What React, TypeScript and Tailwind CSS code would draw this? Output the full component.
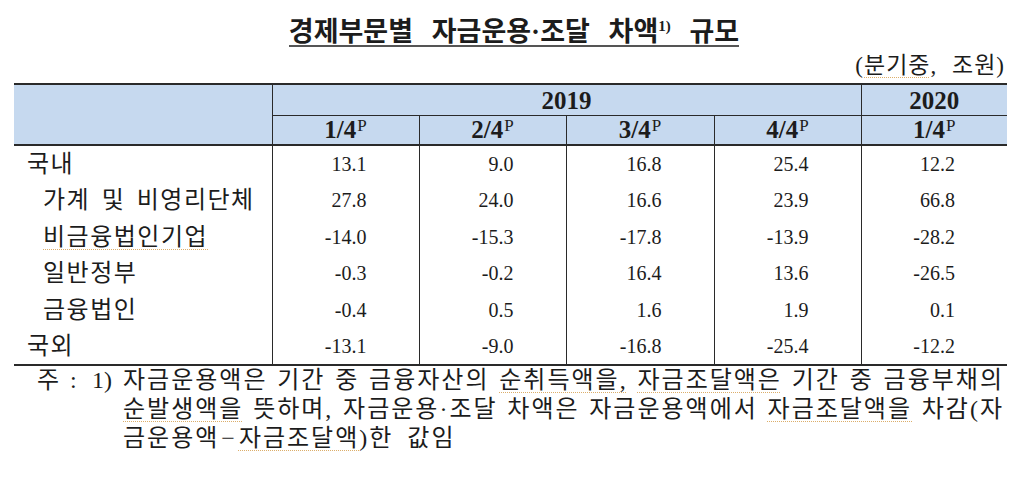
import React from "react";

const FONT = "'Liberation Serif', 'Noto Sans CJK KR', serif";

const rows: { label: string; indent: boolean; vals: string[]; spell?: boolean; h: string }[] = [
  { label: "국내", indent: false, vals: ["13.1", "9.0", "16.8", "25.4", "12.2"], h: "h-[37px]" },
  { label: "가계 및 비영리단체", indent: true, vals: ["27.8", "24.0", "16.6", "23.9", "66.8"], h: "h-[36px]" },
  { label: "비금융법인기업", indent: true, vals: ["-14.0", "-15.3", "-17.8", "-13.9", "-28.2"], spell: true, h: "h-[37px]" },
  { label: "일반정부", indent: true, vals: ["-0.3", "-0.2", "16.4", "13.6", "-26.5"], h: "h-[36px]" },
  { label: "금융법인", indent: true, vals: ["-0.4", "0.5", "1.6", "1.9", "0.1"], h: "h-[37px]" },
  { label: "국외", indent: false, vals: ["-13.1", "-9.0", "-16.8", "-25.4", "-12.2"], h: "h-[37px]" },
];

const Spell = ({ children }: { children: React.ReactNode }) => (
  <span className="underline decoration-dotted decoration-[#dcae6a] decoration-1 underline-offset-[4px]">
    {children}
  </span>
);

const Q = ({ n }: { n: string }) => (
  <span>
    {n}/4<span className="relative -top-[7px] ml-[1px] text-[17px] leading-none font-normal">P</span>
  </span>
);

export default function App() {
  return (
    <div className="w-[1024px] h-[488px] bg-white text-[#1c1c1c] flex flex-col" style={{ fontFamily: FONT }}>
      <div className="flex justify-center pt-[19px] pl-[4px] h-[47px]">
        <span className="inline-block h-[28px] text-[27px] leading-[26px] font-bold border-b-2 border-[#555] [word-spacing:12px]">
          경제부문별 자금운용·조달 차액<span className="relative -top-[10px] text-[15px] leading-none">1)</span> 규모
        </span>
      </div>
      <div className="mt-[8px] h-[22px] flex justify-end pr-[19px] text-[23px] leading-[22px] tracking-[1px] [word-spacing:8px]">
        <span>
          (<Spell>분기중</Spell>, 조원)
        </span>
      </div>
      <table className="mt-[6px] ml-[14px] w-[993px] table-fixed border-collapse">
        <colgroup>
          <col className="w-[258px]" />
          <col className="w-[147px]" />
          <col className="w-[147px]" />
          <col className="w-[148px]" />
          <col className="w-[147px]" />
          <col className="w-[146px]" />
        </colgroup>
        <thead className="bg-[#c6d9ef] text-[25px] font-bold">
          <tr className="h-[31px]">
            <th rowSpan={2} className="border-t-2 border-b-2 border-r border-[#2a2a2a]"></th>
            <th colSpan={4} className="border-t-2 border-b border-r border-[#2a2a2a] leading-[24px] pt-[2px]">
              2019
            </th>
            <th className="border-t-2 border-b border-[#2a2a2a] leading-[24px] pt-[2px]">2020</th>
          </tr>
          <tr className="h-[30px]">
            <th className="border-b-2 border-r border-[#2a2a2a] leading-[24px]"><Q n="1" /></th>
            <th className="border-b-2 border-r border-[#2a2a2a] leading-[24px]"><Q n="2" /></th>
            <th className="border-b-2 border-r border-[#2a2a2a] leading-[24px]"><Q n="3" /></th>
            <th className="border-b-2 border-r border-[#2a2a2a] leading-[24px]"><Q n="4" /></th>
            <th className="border-b-2 border-[#2a2a2a] leading-[24px]"><Q n="1" /></th>
          </tr>
        </thead>
        <tbody className="text-[20px]">
          {rows.map((r, i) => (
            <tr key={i} className={`${r.h} ${i === rows.length - 1 ? "border-b-2 border-[#2a2a2a]" : ""}`}>
              <td className={`border-r border-[#2a2a2a] text-[24px] leading-[24px] tracking-[1.5px] whitespace-nowrap [word-spacing:4px] ${r.indent ? "pl-[29px]" : "pl-[13px]"}`}>
                {r.spell ? <Spell>{r.label}</Spell> : r.label}
              </td>
              {r.vals.map((v, j) => (
                <td
                  key={j}
                  className={`text-right leading-[24px] pr-[52px] ${j < 4 ? "border-r border-[#2a2a2a]" : ""}`}
                >
                  {v}
                </td>
              ))}
            </tr>
          ))}
        </tbody>
      </table>
      <div className="flex pl-[37px] pr-[20px] text-[24px] leading-[29px]">
        <div className="w-[86px] shrink-0 flex">
          <span className="w-[33px]">주</span>
          <span className="w-[22px]">:</span>
          <span>1)</span>
        </div>
        <div className="flex-1 tracking-[2px]">
          <div className="whitespace-nowrap flex justify-between">
            <span>자금운용액은</span>
            <span>기간</span>
            <span>중</span>
            <span>금융자산의</span>
            <span><Spell>순취득액을,</Spell></span>
            <span><Spell>자금조달액은</Spell></span>
            <span>기간</span>
            <span>중</span>
            <span>금융부채의</span>
          </div>
          <div className="whitespace-nowrap flex justify-between">
            <span><Spell>순발생액을</Spell></span>
            <span>뜻하며,</span>
            <span>자금운용·조달</span>
            <span>차액은</span>
            <span>자금운용액에서</span>
            <span><Spell>자금조달액을</Spell></span>
            <span>차감(자</span>
          </div>
          <div className="whitespace-nowrap [word-spacing:6px]">
            금운용액<span className="mx-[2px]">−</span><Spell>자금조달액</Spell>)한 값임
          </div>
        </div>
      </div>
    </div>
  );
}
